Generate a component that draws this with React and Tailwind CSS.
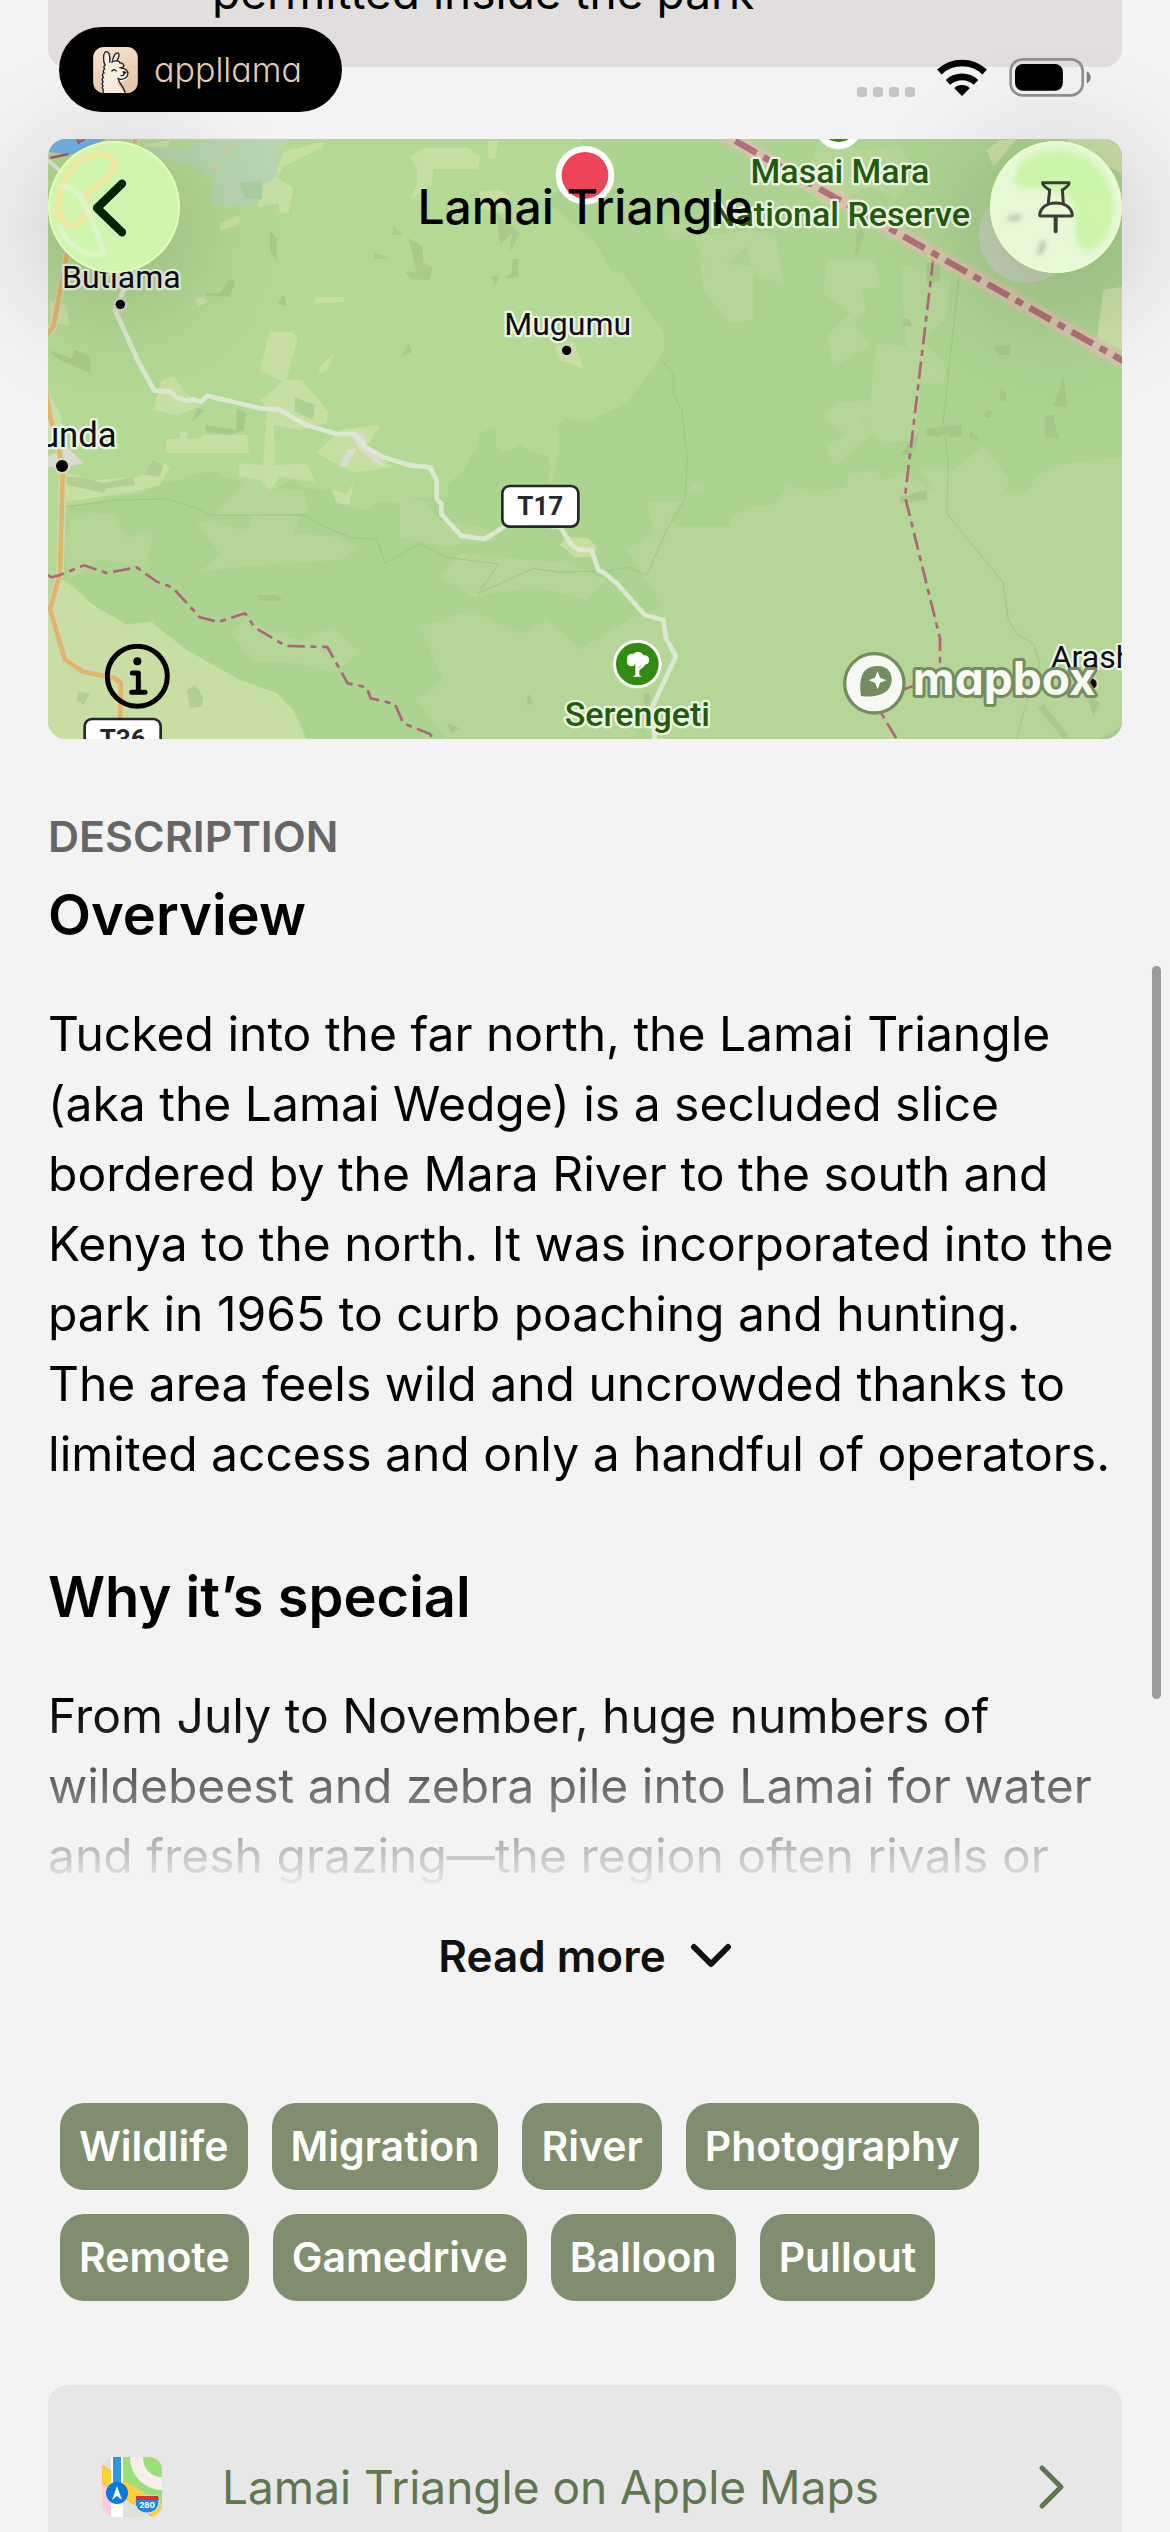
import React from "react";

const LIGHT = [
  "1940,1505 2055,1505 2075,1450 2110,1455 2110,1478 2060,1478 2010,1560 2030,1580 2190,1580 2190,1555 2240,1525 2330,1510 2360,1455 2440,1480 2540,1460 2545,1420 2630,1410 2650,1440 2720,1420 2800,1480 2760,1400 2860,1410 2950,1340 3030,1440 3010,1480 3080,1475 3120,1420 3200,1390 3366,1370 3366,2217 1950,2217 1900,2130 1720,1960 1900,1850 1990,1820 1880,1650 1960,1600",
  "1200,1500 1270,1500 1320,1560 1440,1580 1500,1620 1330,1640 1200,1610",
  "1380,1660 1700,1690 1820,1740 1760,1800 1600,1760 1420,1790 1320,1730",
  "1260,1880 1420,1830 1560,1900 1640,1860 1760,1960 1880,1900 1940,2060 1900,2217 1340,2217 1250,2100 1330,2040",
  "590,1560 740,1590 760,1540 900,1550 880,1600 1010,1610 1070,1640 1020,1680 860,1690 720,1700 600,1715 660,1660 620,1610",
  "215,1550 340,1540 380,1610 460,1590 440,1700 300,1680 210,1740 190,1640",
  "640,1545 740,1440 820,1475 910,1470 930,1540",
  "690,1900 740,1850 800,1890 900,1920 1000,1880 1080,1960 1000,2020 900,1990 760,1985",
  "2480,780 2620,780 2640,860 2580,870 2600,930 2560,960 2610,1040 2500,1100 2480,1010 2550,940 2470,880",
  "2630,1030 2720,1040 2760,1180 2740,1320 2640,1330 2590,1260 2480,1240 2510,1210 2610,1200",
  "2100,780 2260,800 2260,960 2190,970 2110,870",
  "2080,710 2260,690 2330,720 2350,850 2260,820 2240,740 2130,830",
  "2460,420 2580,450 2700,440 2750,520 2690,600 2610,560 2480,620 2400,560",
  "2010,640 2080,700 2010,725 1980,660",
  "2700,790 2850,840 2840,960 2760,1010 2840,1100 2830,1150 2730,1150",
  "2480,1230 2530,1210 2580,1260 2620,1300 2500,1400 2480,1340 2540,1300 2470,1260",
];
const PALE = [
  "850,455 970,425 970,440 850,500 830,530 880,565 865,640 840,640 835,610 770,620 790,555 825,520",
  "660,670 725,643 715,675 660,692",
  "430,435 510,420 500,450 470,500",
  "1230,470 1270,445 1405,443 1442,470 1435,507 1300,507 1295,555 1230,600 1250,555 1250,500",
  "1465,425 1495,422 1485,475 1465,478",
  "1440,575 1500,570 1530,590 1510,640 1440,625",
  "808,996 875,996 893,1015 855,1150 780,1110",
  "780,1200 855,1140 905,1140 985,1235 980,1270 900,1290 790,1270 820,1240",
  "958,1100 1005,1060 980,1110 958,1120",
  "945,892 1032,890 1030,905 945,912",
  "583,895 615,893 622,905 595,922",
  "460,1230 485,1140 520,1130 560,1180 600,1220 530,1245",
  "500,1318 540,1316 540,1295 560,1295 560,1316 600,1316 605,1305 740,1305 748,1358 500,1358",
  "717,1390 790,1395 800,1230 820,1225 825,1395 920,1390 945,1445 840,1430 810,1470 780,1440 717,1430",
  "950,1360 1020,1290 1140,1275 1100,1340 1180,1400 1060,1418",
  "995,1470 1040,1480 1060,1450 1050,1515 1010,1510",
  "200,1420 290,1440 420,1430 470,1380 510,1400 480,1455 400,1475 200,1505 190,1460",
  "190,1740 300,1830 380,1870 450,1865 470,1880 560,1950 720,2040 830,2080 880,2130 920,2217 144,2217 144,1810",
  "1665,1040 1720,1025 1752,1106 1680,1080",
  "1680,1635 1700,1610 1765,1615 1790,1640 1780,1670 1725,1672",
  "150,900 200,915 208,975 150,970",
  "2960,450 3000,420 3050,417 2980,500",
  "3200,417 3366,417 3366,520 3230,460",
  "3310,870 3366,860 3366,1050 3290,1020",
  "3320,880 3350,870 3345,920 3320,920",
  "144,1180 180,1240 200,1330 144,1350",
];
const DARK = [
  "810,693 830,715 830,785 810,752",
  "1180,680 1210,705 1178,705",
  "1122,757 1170,775 1122,777",
  "615,880 660,880 685,840 705,842 690,890 620,887",
  "833,910 852,885 860,920",
  "1490,640 1560,700 1530,755 1535,700 1500,735",
  "1225,715 1268,740 1270,785 1298,805 1290,840 1235,838 1215,815 1250,815",
  "1538,777 1556,777 1556,830 1508,838 1535,820",
  "1475,827 1497,827 1486,858",
  "144,1050 215,1075 225,1050 270,1070 272,1120 180,1080",
  "615,1275 710,1290 710,1225 740,1240 730,1290 690,1305 620,1295",
  "575,1260 595,1225 612,1230 580,1262",
  "200,1430 250,1432 310,1450 400,1430 405,1455 320,1465 310,1478 200,1455",
  "430,1425 460,1380 490,1390 480,1430",
  "770,1785 832,1785 850,1802 782,1802",
  "2570,690 2595,695 2580,745 2565,780",
  "2780,790 2820,790 2820,845 2780,848",
  "2710,955 2730,960 2738,980 2710,975",
  "2980,1040 3030,1035 3030,1065 2995,1065",
  "3000,1170 3020,1180 3018,1205 3000,1200",
  "2950,1250 2960,1230 2978,1235 2968,1255",
  "2780,1285 2885,1275 2885,1310 2850,1310 2835,1300 2815,1312 2780,1305",
  "2908,1290 2945,1325 2908,1315",
  "3135,1245 3160,1245 3175,1315 3135,1310",
  "3170,1195 3190,1130 3195,1170 3200,1220 3160,1215",
  "2700,1365 2740,1310 2755,1300 2750,1345 2725,1365",
  "2700,1490 2780,1470 2780,1500 2700,1510",
  "3260,2080 3300,2110 3280,2150",
  "3130,2110 3210,2215 3190,2217 3115,2125",
  "3300,2217 3366,2180 3366,2217",
  "1585,2080 1600,2110 1580,2115",
  "1932,2080 1950,2080 1952,2105 1932,2125",
  "1340,2170 1380,2185 1355,2200",
  "1205,1070 1225,1030 1236,1055",
  "235,2075 270,2080 250,2115 230,2100",
  "560,2070 585,2055 610,2090 605,2120 570,2125",
];

const ROAD =
  "375,860 345,930 415,1085 463,1172 510,1175 530,1192 555,1202 580,1198 602,1206 622,1187 780,1225 835,1228 920,1276 1010,1302 1065,1302 1095,1340 1150,1372 1230,1396 1290,1402 1310,1442 1310,1496 1324,1512 1324,1542 1383,1607 1453,1617 1530,1570 1680,1580 1715,1635 1735,1648 1775,1650 1795,1710 1812,1718 1850,1750 1935,1845 1990,1860 1998,1915 2028,1968 1955,2125 1965,2217";
const HIGHWAYS = [
  "412,405 400,440 340,520 250,600 215,690 160,980 130,1015",
  "138,1170 150,1250 175,1330 188,1420 180,1720 150,1828 195,1980 250,2015 345,2035 363,2050 358,2217",
];
const BORDERS = [
  "144,1725 155,1732 180,1725 252,1696 320,1719 410,1702 470,1745 517,1762 600,1852 655,1866 735,1840 765,1883 858,1938 982,1941 1043,2050 1100,2062 1112,2095 1185,2112 1210,2170 1290,2202 1300,2217",
  "2800,775 2715,1490 2820,1915 2820,2020 2790,2040 2620,2100 2650,2150 2690,2217",
];

function Label({ x, y, size = 96, color = "#0b0b10", weight = 400, anchor = "middle", children }) {
  return (
    <text
      x={x}
      y={y}
      fontSize={size}
      fontWeight={weight}
      fill={color}
      textAnchor={anchor}
      stroke="#edf5e4"
      strokeWidth="14"
      strokeLinejoin="round"
      paintOrder="stroke"
    >
      {children}
    </text>
  );
}

function Shield({ x, y, children }) {
  return (
    <g>
      <rect x={x} y={y} width="228" height="122" rx="22" fill="#fff" stroke="#25272f" strokeWidth="8" />
      <text x={x + 114} y={y + 87} fontSize="78" fontWeight="700" fill="#25272f" textAnchor="middle">
        {children}
      </text>
    </g>
  );
}

function MapDrawing() {
  return (
    <svg
      viewBox="144 417 3222 1800"
      preserveAspectRatio="xMidYMid slice"
      className="block h-full w-full font-['Roboto',sans-serif]"
      role="img"
      aria-label="Map of the Lamai Triangle"
    >
      <rect x="144" y="417" width="3222" height="1800" fill="#b4d994" />
      <polygon
        fill="#add391"
        points="1745,417 1745,520 1640,600 1760,710 1785,725 1835,815 1870,820 1930,915 1990,995 1995,1040 1980,1075 1880,1210 1765,1263 1715,1258 1697,1250 1675,1275 1678,1350 1657,1450 1645,1445 1652,1410 1645,1368 1590,1352 1560,1335 1535,1353 1500,1353 1487,1340 1487,1280 1450,1293 1435,1310 1435,1345 1415,1365 1393,1410 1345,1450 1342,1490 1250,1492 1200,1510 1130,1505 1100,1530 1040,1520 990,1470 920,1465 870,1440 810,1475 750,1445 680,1435 645,1412 580,1425 540,1440 470,1450 430,1480 350,1490 200,1520 190,1740 330,1740 420,1765 450,1830 470,1880 560,1950 720,2040 830,2080 880,2130 920,2217 3366,2217 3366,417"
      />
      <g fill="#b6d698">
        {LIGHT.map((p) => (
          <polygon key={p} points={p} />
        ))}
      </g>
      <g fill="#c8dfa4">
        {PALE.map((p) => (
          <polygon key={p} points={p} />
        ))}
      </g>
      <polygon fill="#add391" points="213,1740 330,1742 420,1760 455,1830 450,1865 380,1873 280,1815 213,1750" />
      <polygon fill="#add391" points="885,1190 945,1215 940,1260 885,1235" />
      <polygon
        fill="#b6d5b0"
        points="430,440 560,445 640,417 865,417 840,450 830,530 790,555 785,597 720,618 640,612 635,540 570,490 500,480 440,460"
      />
      <g fill="#c3d0ab">
        <polygon points="650,455 715,425 690,465" />
        <polygon points="635,487 660,487 665,517 645,515" />
        <polygon points="678,550 708,590 675,590" />
      </g>
      <polygon fill="#a9d0a0" points="720,548 785,540 785,597 735,595" />
      <polygon fill="#74b3e4" points="144,417 320,417 210,465 144,455" />
      <g fill="#9cb87c" fillOpacity="0.45">
        {DARK.map((p) => (
          <polygon key={p} points={p} />
        ))}
      </g>
      <g fill="none" stroke="#9fc588" strokeWidth="3">
        <polyline points="200,1520 350,1500 500,1497 590,1525 630,1545 915,1545 970,1580 1060,1615 1130,1617 1155,1690 1260,1630 1340,1672 1495,1692 1435,1780 1600,1705 1680,1717 1830,1712 1885,1702 1940,1725 2000,1590 2055,1500 2062,1380 2045,1230 2020,1180 2020,1120 1980,1075" />
        <polyline points="2880,800 2830,1260 2845,1400 2840,1540 3008,1745 3025,1860 3055,1907 3100,1930 3120,1990 3075,2120 3050,2217" />
      </g>
      <g fill="#dcdcd4">
        <polygon points="144,1370 200,1340 250,1390 200,1400 144,1400" />
        <polygon points="1020,1400 1040,1350 1070,1345 1040,1400" />
        <polygon points="1050,1300 1090,1300 1100,1335 1155,1400 1130,1390 1080,1350" />
      </g>

      <polyline points="144,480 230,560" fill="none" stroke="#dfe8d4" strokeWidth="12" />
      <polyline points={ROAD} fill="none" stroke="#dde8d2" strokeWidth="14" strokeLinejoin="round" />
      {HIGHWAYS.map((p) => (
        <g key={p} fill="none" strokeLinejoin="round">
          <polyline points={p} stroke="#d3d4c0" strokeWidth="22" />
          <polyline points={p} stroke="#e0b764" strokeWidth="14" />
        </g>
      ))}

      <polyline points="150,474 205,462" fill="none" stroke="#a8576e" strokeWidth="8" />
      <polyline points="232,417 236,428 255,417" fill="none" stroke="#a8576e" strokeWidth="6" />
      {BORDERS.map((p) => (
        <polyline key={p} points={p} fill="none" stroke="#b0647a" strokeWidth="8" strokeDasharray="52 17 18 17" />
      ))}
      <polyline points="2130,380 3400,1100" fill="none" stroke="#d9c6ae" strokeOpacity="0.5" strokeWidth="52" />
      <polyline points="2130,380 3400,1100" fill="none" stroke="#d4c4a8" strokeWidth="34" />
      <polyline
        points="2206,423 3400,1100"
        fill="none"
        stroke="#b0707a"
        strokeWidth="19"
        strokeDasharray="73 24 24 24"
      />

      <circle cx="2516" cy="380" r="68" fill="#fff" />
      <circle cx="2516" cy="368" r="58" fill="#338a10" />

      <Label x={2520} y={548} size={102} color="#235a0b" weight={500}>
        Masai Mara
      </Label>
      <Label x={2522} y={678} size={102} color="#235a0b" weight={500}>
        National Reserve
      </Label>

      <circle cx="361" cy="913" r="22" fill="#cfd6c2" />
      <circle cx="361" cy="913" r="14" fill="#000" />
      <Label x={364} y={865}>Butiama</Label>
      <circle cx="1700" cy="1051" r="22" fill="#cdd6b8" />
      <circle cx="1700" cy="1051" r="14" fill="#000" />
      <Label x={1703} y={1004}>Mugumu</Label>
      <circle cx="186" cy="1398" r="24" fill="#d9d9d0" />
      <circle cx="186" cy="1398" r="18" fill="#000" />
      <Label x={350} y={1341} size={104} anchor="end">
        Bunda
      </Label>
      <circle cx="3275" cy="2051" r="22" fill="#ccd8b8" />
      <circle cx="3275" cy="2051" r="15" fill="#000" />
      <Label x={3152} y={2003} anchor="start">
        Arash
      </Label>

      <circle cx="1912" cy="1992" r="73" fill="#fff" />
      <circle cx="1912" cy="1992" r="64" fill="#338a10" />
      <g fill="#fff">
        <circle cx="1896" cy="1976" r="15" />
        <circle cx="1914" cy="1972" r="17" />
        <circle cx="1934" cy="1980" r="14" />
        <circle cx="1894" cy="1986" r="13" />
        <circle cx="1924" cy="1988" r="12" />
        <path d="M1906 1985h12v18l12-8 3 4-15 12v14l8 5h-28l8-5z" />
      </g>
      <Label x={1912} y={2178} size={102} color="#235a0b" weight={500}>
        Serengeti
      </Label>

      <Shield x={1507} y={1458}>T17</Shield>
      <Shield x={254} y={2157}>T36</Shield>

      <circle cx="1755" cy="526" r="79" fill="#ee4458" stroke="#fff" strokeWidth="18" />
      <circle cx="3080" cy="705" r="144" fill="#c3d2b6" />

      <g>
        <circle cx="2623" cy="2050" r="89" fill="#f8faf4" fillOpacity="0.97" stroke="#748c60" strokeWidth="10" />
        <path d="M2583 2088c-7-48 0-90 50-90 30 0 42 20 42 40 0 46-50 56-92 50z" fill="#748c60" />
        <path d="M2633 2014l7 19 19 8-19 7-7 20-8-20-19-7 19-8z" fill="#fff" />
        <text
          x="2738"
          y="2085"
          fontSize="138"
          fontWeight="700"
          fill="#f8faf4"
          stroke="#748c60"
          strokeWidth="18"
          strokeLinejoin="round"
          paintOrder="stroke"
          className="font-['Inter',sans-serif] [font-feature-settings:'cv11']"
        >
          mapbox
        </text>
      </g>
    </svg>
  );
}

function LlamaIcon() {
  return (
    <svg viewBox="0 0 134 138" className="h-[46px] w-[45px]" aria-hidden="true">
      <defs>
        <linearGradient id="llama-bg" x1="0" y1="0" x2="0.4" y2="1">
          <stop offset="0" stopColor="#f7e5d4" />
          <stop offset="1" stopColor="#e9c9ae" />
        </linearGradient>
      </defs>
      <rect width="134" height="138" rx="32" fill="url(#llama-bg)" />
      <path
        d="M28 137l3-12-4-8 4-8-4-9 4-8-3-9 6-7-3-9 5-8-1-5c-7-12-6-38 4-40 9-1 11 14 10 30l6-1c0-14 10-26 15-24 6 3 1 16-3 22 10 4 14 6 12 12 6 0 14 4 13 10-1 5-4 6-8 5 10 1 20 8 20 17 0 14-14 20-24 20-8 0-6-6-8 0 2 14 20 22 24 42z"
        fill="#fbf0e4"
      />
      <g fill="none" stroke="#1c2430" strokeWidth="4" strokeLinecap="round" strokeLinejoin="round">
        <path d="M36 54c-8-12-6-40 4-40 9 0 11 14 10 32" />
        <path d="M58 42c1-14 10-26 17-24 6 4 1 16-4 23" />
        <path d="M56 46c10-8 24-4 24 2 6-2 14 4 12 10-2 6-8 4-12 4" />
        <path d="M36 54c-6 4-4 10-1 12-6 4-6 9-2 12-7 4-6 9-2 13-6 4-5 9-1 13-5 4-4 9 0 12-4 4-3 8 0 11v10" />
        <path d="M86 64c12 0 19 7 18 17-1 10-12 17-22 16-6-1-8-3-8-3" />
        <path d="M56 72c4-5 10-5 13 0" />
        <path d="M90 74l8 2-5 5zM93 81c-2 5-6 6-9 4" />
        <path d="M76 98c2 12 16 20 20 39" />
      </g>
    </svg>
  );
}

function WifiIcon() {
  return (
    <svg viewBox="0 0 150 111" className="h-[37px] w-[50px]" aria-label="Wi-Fi">
      <path d="M75 111L52 88c10-13 36-13 46 0z" />
      <g fill="none" stroke="#000" strokeWidth="20">
        <path d="M33 70c24-22 60-22 84 0" />
        <path d="M7 39c38-36 98-36 136 0" />
      </g>
    </svg>
  );
}

function BatteryIcon() {
  return (
    <svg viewBox="0 0 246 118" className="h-[39px] w-[82px]" aria-label="Battery">
      <rect x="4" y="4" width="218" height="109" rx="36" fill="none" stroke="#909090" strokeWidth="8" />
      <rect x="17" y="18" width="145" height="81" rx="24" />
      <path d="M234 40c16 6 16 31 0 37z" fill="#808080" />
    </svg>
  );
}

function BackButton() {
  return (
    <button
      type="button"
      aria-label="Back"
      className="size-[132px] overflow-hidden rounded-full bg-[#cff5ae] shadow-[0_20px_120px_10px_rgba(0,0,0,0.2)]"
    >
      <svg viewBox="0 0 396 396" className="size-full">
        <defs>
          <filter id="soft-l" x="-20%" y="-20%" width="140%" height="140%">
            <feGaussianBlur stdDeviation="5" />
          </filter>
        </defs>
        <g fill="none" filter="url(#soft-l)">
          <path
            d="M30 230C22 130 80 42 150 40c60 0 60 30 34 64-30 36-80 40-74 80 16 30-10 70-36 72-26 0-40-30-44-60z"
            stroke="#f7e49a"
            strokeWidth="15"
          />
          <path d="M40 140c40-20 80 60 100 120 20 50 40 80 10 82C100 344 40 290 34 250" stroke="#dff7cc" strokeWidth="14" />
        </g>
        <circle cx="198" cy="198" r="195" fill="none" stroke="#e6fdba" strokeWidth="6" />
        <path
          d="M222 128L147 201l75 73"
          fill="none"
          stroke="#042505"
          strokeWidth="25"
          strokeLinecap="round"
          strokeLinejoin="round"
        />
      </svg>
    </button>
  );
}

function PinButton() {
  return (
    <button
      type="button"
      aria-label="Pin place"
      className="size-[132px] overflow-hidden rounded-full bg-[#e6f8d6] shadow-[0_20px_120px_10px_rgba(0,0,0,0.2)]"
    >
      <svg viewBox="0 0 396 396" className="size-full">
        <defs>
          <filter id="soft-r" x="-20%" y="-20%" width="140%" height="140%">
            <feGaussianBlur stdDeviation="8" />
          </filter>
        </defs>
        <g filter="url(#soft-r)">
          <path
            d="M76 130C66 70 120 30 200 26C310 30 372 110 370 200C368 260 340 324 292 326C250 324 256 240 250 190C240 150 180 146 130 140C100 140 84 140 76 130Z"
            fill="#cdf5aa"
          />
          <path d="M56 234l36-6M148 340l14-40" stroke="#b0bda4" strokeWidth="14" />
          <ellipse cx="326" cy="210" rx="24" ry="46" fill="#d6f3aa" fillOpacity="0.6" />
        </g>
        <circle cx="198" cy="198" r="195" fill="none" stroke="#ecfbc8" strokeWidth="6" />
        <g fill="none" stroke="#3a3d36" strokeWidth="9" strokeLinejoin="round" strokeLinecap="round">
          <path d="M158 125h79c2 10-14 17-20 22l3 39M158 125c-2 10 14 17 21 22l-4 39" />
          <path d="M149 219c4-18 20-33 48-33 30 0 46 15 50 33 1 4-1 6-4 6H153c-3 0-5-2-4-6z" />
          <path d="M197 229v42" strokeWidth="12" />
        </g>
      </svg>
    </button>
  );
}

function AppleMapsIcon() {
  return (
    <svg viewBox="0 0 60 60" className="size-[60px] shrink-0" aria-hidden="true">
      <defs>
        <clipPath id="maps-tile">
          <rect width="60" height="60" rx="13" />
        </clipPath>
      </defs>
      <g clipPath="url(#maps-tile)">
        <rect width="60" height="60" fill="#e2e0d8" />
        <rect y="26" width="9" height="34" fill="#ffccd8" />
        <path d="M0 8L60 50V66L0 26z" fill="#ffd233" stroke="#f3b52c" strokeWidth="1" />
        <path d="M21 0H60V48L21 22z" fill="#9bdf78" />
        <path d="M28 0h13c0 12 8 20 19 20v13C41 32 28 18 28 0z" fill="#f3efe9" />
        <rect x="9" y="0" width="12" height="60" fill="#fff" />
        <rect x="11" y="0" width="8" height="30" fill="#2e95e6" />
        <circle cx="15" cy="36" r="11" fill="#0879dd" />
        <path d="M15 29l5 14-5-4-5 4z" fill="#fff" />
        <path d="M34 39h22c3 8-1 17-11 17s-14-9-11-17z" fill="#2189dc" stroke="#cfe5f5" strokeWidth="1" />
        <path d="M34 39h22l1 4H34z" fill="#e02b2f" />
        <text x="45" y="51" fontSize="8" fontWeight="700" fill="#fff" textAnchor="middle">
          280
        </text>
      </g>
    </svg>
  );
}

const TAGS = ["Wildlife", "Migration", "River", "Photography", "Remote", "Gamedrive", "Balloon", "Pullout"];

export default function App() {
  return (
    <div className="relative h-screen overflow-hidden bg-[#f3f3f3] font-['Inter',sans-serif] text-black">
      <header className="absolute inset-x-0 top-0 z-10">
        <div className="flex items-center justify-between pt-[27px] pr-[79px] pl-[59px]">
          <div className="flex h-[85px] w-[283px] items-center gap-4 rounded-full bg-black pl-[34px]">
            <LlamaIcon />
            <span className="text-[34px] leading-none font-light text-[#e3cdbb] [font-feature-settings:'cv11']">
              appllama
            </span>
          </div>
          <div className="flex items-center gap-[22px] pt-4">
            <div className="flex gap-1.5 pt-7">
              <i className="size-2.5 rounded-[3px] bg-[#c4c4c4]" />
              <i className="size-2.5 rounded-[3px] bg-[#c4c4c4]" />
              <i className="size-2.5 rounded-[3px] bg-[#c4c4c4]" />
              <i className="size-2.5 rounded-[3px] bg-[#c4c4c4]" />
            </div>
            <WifiIcon />
            <BatteryIcon />
          </div>
        </div>
        <div className="mt-[29px] flex items-center justify-between px-12">
          <BackButton />
          <h1 className="text-[48px] leading-[60px] font-medium">Lamai Triangle</h1>
          <PinButton />
        </div>
      </header>

      <main className="px-12">
        <div className="flex h-[67px] items-end overflow-hidden rounded-b-[18px] bg-[#e2dedd] pb-10 pl-[164px]">
          <p className="text-[46px] leading-[70px]">permitted inside the park</p>
        </div>

        <section className="relative mt-[72px] h-[600px] overflow-hidden rounded-[18px]">
          <MapDrawing />
          <button type="button" aria-label="Map information" className="absolute bottom-[30px] left-[57px] size-[65px]">
            <svg viewBox="0 0 195 195" className="size-full" fill="none" stroke="#000">
              <circle cx="97" cy="97" r="90" strokeWidth="15" />
              <circle cx="97" cy="52" r="12" fill="#000" stroke="none" />
              <path d="M82 87h18v58M80 145h40" strokeWidth="15" strokeLinecap="round" strokeLinejoin="round" />
            </svg>
          </button>
        </section>

        <section className="pt-[72px]">
          <h2 className="text-[43px] leading-[50px] font-semibold text-[#666]">DESCRIPTION</h2>
          <div className="h-[1030px] overflow-hidden pr-1 [mask-image:linear-gradient(to_bottom,#000_82%,transparent_100%)]">
            <h3 className="mt-[18px] text-[56px] leading-[72px] font-semibold">Overview</h3>
            <p className="mt-12 text-[48px] leading-[70px]">
              Tucked into the far north, the Lamai Triangle (aka the Lamai Wedge) is a secluded slice bordered by the
              Mara River to the south and Kenya to the north. It was incorporated into the park in 1965 to curb poaching
              and hunting. The area feels wild and uncrowded thanks to limited access and only a handful of operators.
            </p>
            <h3 className="mt-[72px] text-[56px] leading-[72px] font-semibold">Why it’s special</h3>
            <p className="mt-12 text-[48px] leading-[70px]">
              From July to November, huge numbers of wildebeest and zebra pile into Lamai for water and fresh
              grazing—the region often rivals or
            </p>
          </div>
          <button
            type="button"
            className="mx-auto mt-[35px] flex items-center gap-6 text-[44px] leading-[60px] font-semibold text-[#111]"
          >
            Read more
            <svg viewBox="0 0 42 26" className="h-[26px] w-[42px]" aria-hidden="true">
              <path
                d="M4 4l17 17L38 4"
                fill="none"
                stroke="currentColor"
                strokeWidth="6"
                strokeLinecap="round"
                strokeLinejoin="round"
              />
            </svg>
          </button>
        </section>

        <ul className="mt-[117px] flex flex-wrap gap-6 px-3">
          {TAGS.map((tag) => (
            <li
              key={tag}
              className="rounded-3xl bg-[#808e70] px-[19px] text-[41px] leading-[87px] font-semibold text-white"
            >
              {tag}
            </li>
          ))}
        </ul>

        <a
          href="#apple-maps"
          className="mt-[84px] flex items-center rounded-[20px] bg-[#e7e7e7] py-[66px] pr-[56px] pl-[54px] text-[46px] leading-[72px] text-[#607650]"
        >
          <AppleMapsIcon />
          <span className="ml-[60px] grow">Lamai Triangle on Apple Maps</span>
          <svg viewBox="0 0 28 46" className="h-[46px] w-[28px]" aria-hidden="true">
            <path
              d="M4 4l19 19L4 42"
              fill="none"
              stroke="currentColor"
              strokeWidth="5"
              strokeLinecap="round"
              strokeLinejoin="round"
            />
          </svg>
        </a>
      </main>

      <div className="absolute top-[966px] right-[9px] h-[733px] w-[9px] rounded-full bg-[#9c9c9c]" />
    </div>
  );
}
